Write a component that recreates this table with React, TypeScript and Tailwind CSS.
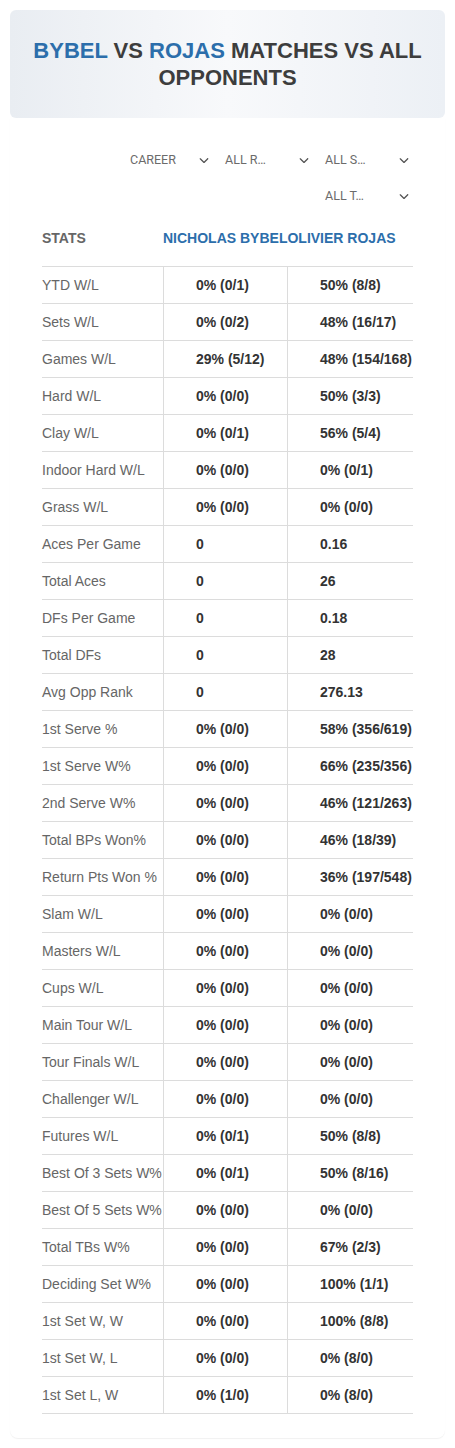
import { FaChevronDown } from "react-icons/fa6";

type Row = [string, string, string];

const rows: Row[] = [
  ["YTD W/L", "0% (0/1)", "50% (8/8)"],
  ["Sets W/L", "0% (0/2)", "48% (16/17)"],
  ["Games W/L", "29% (5/12)", "48% (154/168)"],
  ["Hard W/L", "0% (0/0)", "50% (3/3)"],
  ["Clay W/L", "0% (0/1)", "56% (5/4)"],
  ["Indoor Hard W/L", "0% (0/0)", "0% (0/1)"],
  ["Grass W/L", "0% (0/0)", "0% (0/0)"],
  ["Aces Per Game", "0", "0.16"],
  ["Total Aces", "0", "26"],
  ["DFs Per Game", "0", "0.18"],
  ["Total DFs", "0", "28"],
  ["Avg Opp Rank", "0", "276.13"],
  ["1st Serve %", "0% (0/0)", "58% (356/619)"],
  ["1st Serve W%", "0% (0/0)", "66% (235/356)"],
  ["2nd Serve W%", "0% (0/0)", "46% (121/263)"],
  ["Total BPs Won%", "0% (0/0)", "46% (18/39)"],
  ["Return Pts Won %", "0% (0/0)", "36% (197/548)"],
  ["Slam W/L", "0% (0/0)", "0% (0/0)"],
  ["Masters W/L", "0% (0/0)", "0% (0/0)"],
  ["Cups W/L", "0% (0/0)", "0% (0/0)"],
  ["Main Tour W/L", "0% (0/0)", "0% (0/0)"],
  ["Tour Finals W/L", "0% (0/0)", "0% (0/0)"],
  ["Challenger W/L", "0% (0/0)", "0% (0/0)"],
  ["Futures W/L", "0% (0/1)", "50% (8/8)"],
  ["Best Of 3 Sets W%", "0% (0/1)", "50% (8/16)"],
  ["Best Of 5 Sets W%", "0% (0/0)", "0% (0/0)"],
  ["Total TBs W%", "0% (0/0)", "67% (2/3)"],
  ["Deciding Set W%", "0% (0/0)", "100% (1/1)"],
  ["1st Set W, W", "0% (0/0)", "100% (8/8)"],
  ["1st Set W, L", "0% (0/0)", "0% (8/0)"],
  ["1st Set L, W", "0% (1/0)", "0% (8/0)"],
];

const Select = ({ label, pad }: { label: string; pad: string }) => (
  <div className={`flex h-9 w-[100px] items-center justify-between pr-[4px] ${pad}`}>
    <span className="text-[12.5px] text-[#6b6b6b]" style={{ fontFamily: "Roboto, 'Noto Sans', sans-serif" }}>
      {label}
    </span>
    <FaChevronDown size={10} className="text-[#555]" />
  </div>
);

export default function App() {
  return (
    <div className="min-h-[1448px] bg-white px-[10px] pt-[10px]" style={{ fontFamily: "'Liberation Sans', Arial, sans-serif" }}>
      <div className="rounded-[6px] bg-gradient-to-r from-[#e9edf2] via-[#f8f9fb] to-[#ecf0f5] px-4 py-[27px] text-center text-[22px] font-bold uppercase leading-[27px] text-[#3d3d3d]">
        <span className="text-[#2c6eab]">Bybel</span> vs <span className="text-[#2c6eab]">Rojas</span> Matches vs All
        Opponents
      </div>

      <div className="rounded-b-[8px] px-[32px] pt-[24px] pb-[24px] shadow-[0_1px_1px_rgba(0,0,0,0.06)]">
        <div className="flex flex-wrap justify-end">
          <Select label="CAREER" pad="pl-[17px]" />
          <Select label="ALL R…" pad="pl-3" />
          <Select label="ALL S…" pad="pl-3" />
          <Select label="ALL T…" pad="pl-3" />
        </div>

        <div className="mt-px flex h-[52px] items-center border-b border-[#dcdcdc] pb-[4px] text-[14px] font-bold uppercase">
          <div className="w-[121px] text-[#666]">Stats</div>
          <div className="whitespace-nowrap text-[#2c6eab]">
            <span>Nicholas Bybel</span>
            <span>Olivier Rojas</span>
          </div>
        </div>

        {rows.map(([label, a, b]) => (
          <div key={label} className="flex h-[37px] border-b border-[#dcdcdc] text-[14px]">
            <div className="flex w-[121px] items-center whitespace-nowrap text-[#666]">{label}</div>
            <div className="flex w-[124px] items-center border-l border-[#dcdcdc] pl-[32px] font-bold text-[#333]">{a}</div>
            <div className="flex flex-1 items-center whitespace-nowrap border-l border-[#dcdcdc] pl-[32px] font-bold text-[#333]">
              {b}
            </div>
          </div>
        ))}
      </div>
    </div>
  );
}
